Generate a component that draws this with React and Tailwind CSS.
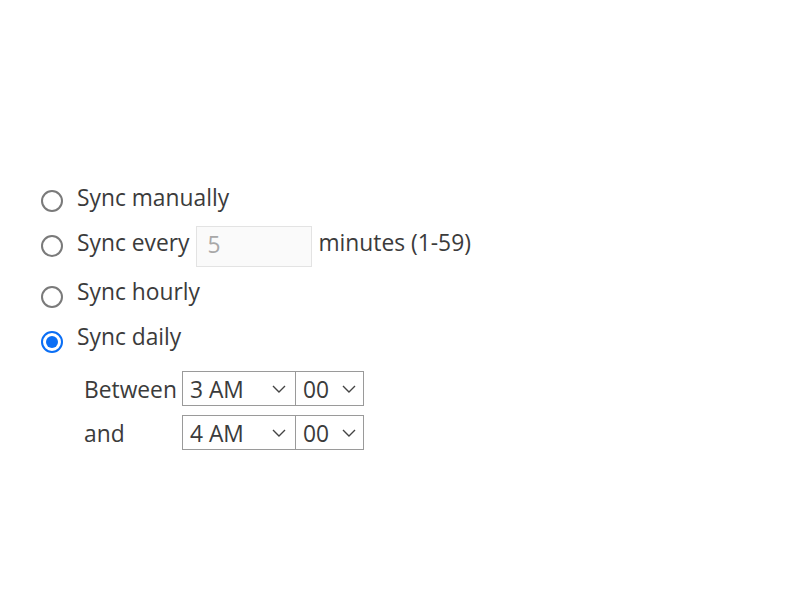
import React from 'react';

const Radio = ({ checked }) => (
  <span
    className={
      checked
        ? 'w-[22px] h-[22px] rounded-full border-2 border-[#0a6ef5] flex items-center justify-center shrink-0'
        : 'w-[22px] h-[22px] rounded-full border-2 border-[#7a7a7a] shrink-0'
    }
  >
    {checked && <span className="w-[12px] h-[12px] rounded-full bg-[#0a6ef5]"></span>}
  </span>
);

const Chevron = () => (
  <svg width="14" height="8" viewBox="0 0 14 8" fill="none" stroke="#444" strokeWidth="1.4">
    <path d="M1 1l6 6 6-6" />
  </svg>
);

const Select = ({ value, wide }) => (
  <div
    className={
      wide
        ? 'w-[114px] h-[35px] border border-[#9a9a9a] flex items-center justify-between pl-[7px] pr-[9px]'
        : 'w-[69px] h-[35px] -ml-px border border-[#9a9a9a] flex items-center justify-between pl-[7px] pr-[7px]'
    }
  >
    <span className="pt-[4px]">{value}</span>
    <Chevron />
  </div>
);

export default function App() {
  return (
    <div className="w-[800px] h-[600px] bg-white text-[#3b3b3b] text-[22.8px] font-['Open_Sans',sans-serif] pt-[181px] pl-[41px]">
      <div className="flex items-center gap-[14px] h-[40px]">
        <Radio />
        <span className="pb-[6px]">Sync manually</span>
      </div>
      <div className="flex items-center gap-[14px] h-[50px]">
        <Radio />
        <span className="pb-[6px]">Sync every</span>
        <div className="-ml-[7px] w-[116px] h-[41px] border border-[#e3e3e3] bg-[#fafafa] flex items-center px-[10px] pb-[2px] text-[#a8a8a8]">
          5
        </div>
        <span className="-ml-[8px] pb-[6px]">minutes (1-59)</span>
      </div>
      <div className="flex items-center gap-[14px] h-[52px]">
        <Radio />
        <span className="pb-[10px]">Sync hourly</span>
      </div>
      <div className="flex items-center gap-[14px] h-[38px]">
        <Radio checked />
        <span className="pb-[10px]">Sync daily</span>
      </div>
      <div className="mt-[10px] pl-[43px] flex flex-col gap-[9px]">
        <div className="flex items-center h-[35px]">
          <span className="w-[98px] pt-[4px]">Between</span>
          <Select value="3 AM" wide />
          <Select value="00" />
        </div>
        <div className="flex items-center h-[35px]">
          <span className="w-[98px] pt-[4px]">and</span>
          <Select value="4 AM" wide />
          <Select value="00" />
        </div>
      </div>
    </div>
  );
}
